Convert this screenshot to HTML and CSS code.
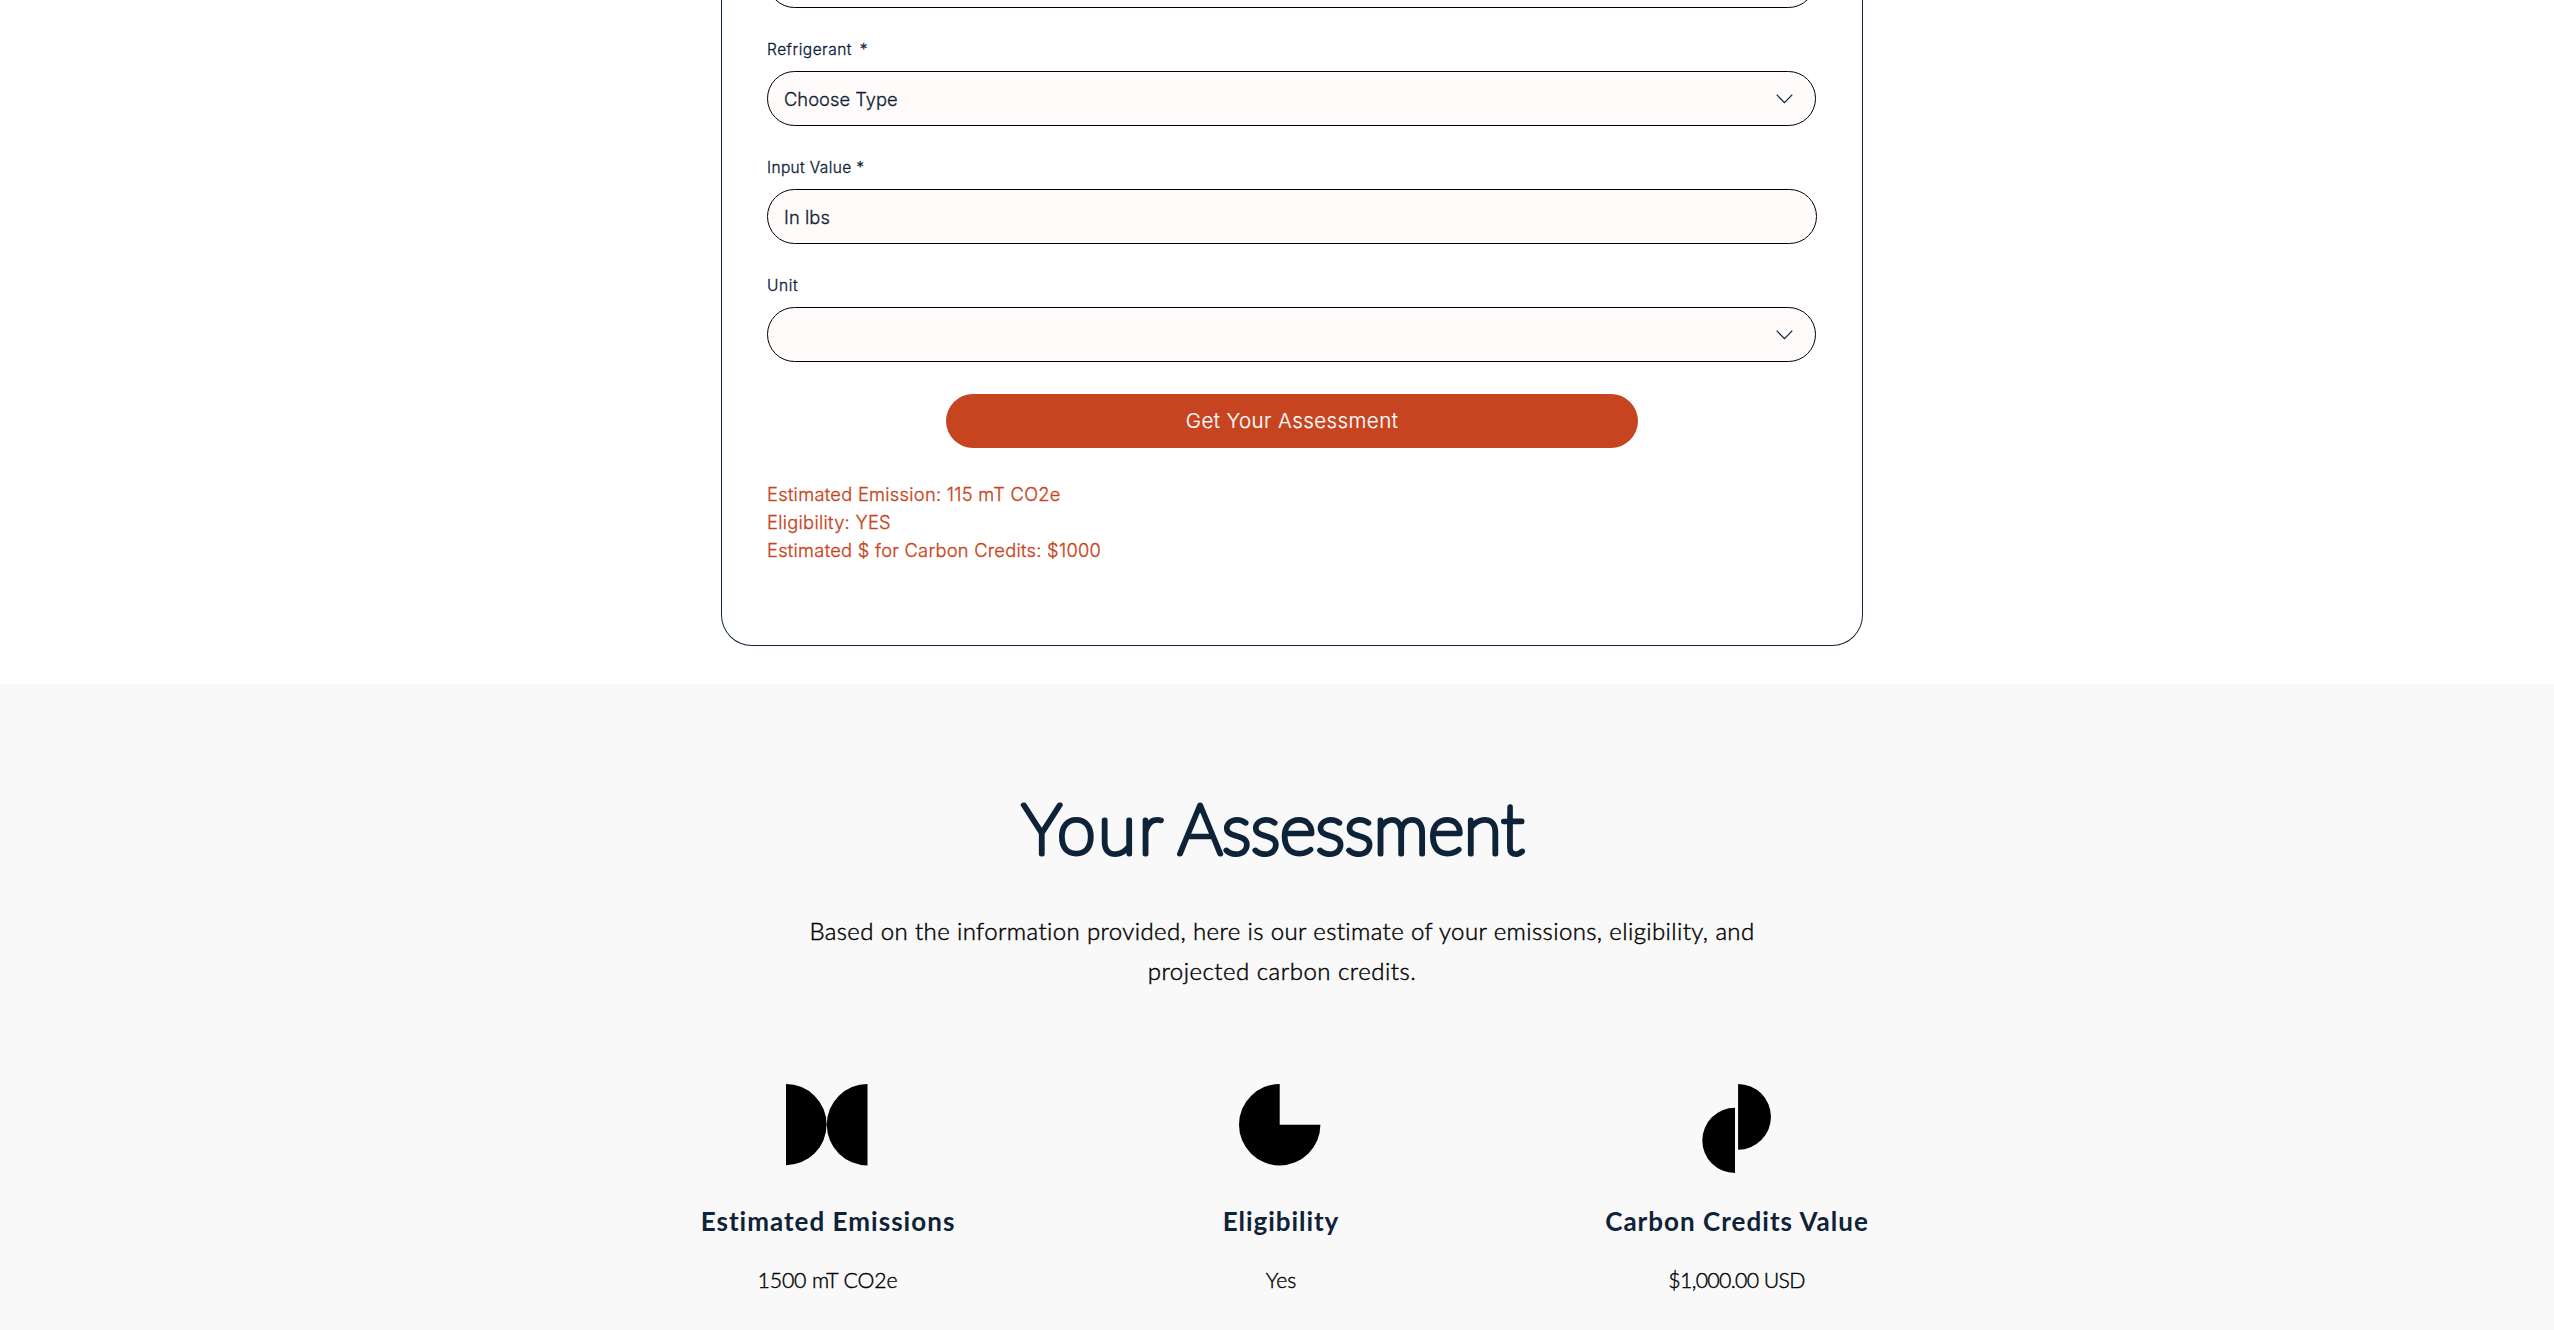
FILE: index.html
```
<!DOCTYPE html>
<html lang="en">
<head>
<meta charset="utf-8">
<title>Your Assessment</title>
<link rel="stylesheet" href="styles.css">
</head>
<body>
<section class="form-section">
  <form class="card">
    <div class="control control-cut"></div>
    <div class="label label-refrigerant">Refrigerant <span class="star star-wide">*</span></div>
    <div class="control">
      <span class="value value-type">Choose Type</span>
      <svg class="chevron" width="17" height="10" viewBox="0 0 17 10"><path d="M.7 .7 L8.5 8.7 L16.3 .7" fill="none" stroke="#0e2238" stroke-width="1.2"/></svg>
    </div>
    <div class="label label-value">Input Value <span class="star">*</span></div>
    <div class="control control-input"><span class="value">In lbs</span></div>
    <div class="label label-unit">Unit</div>
    <div class="control">
      <svg class="chevron" width="17" height="10" viewBox="0 0 17 10"><path d="M.7 .7 L8.5 8.7 L16.3 .7" fill="none" stroke="#0e2238" stroke-width="1.2"/></svg>
    </div>
    <button class="submit" type="button">Get Your Assessment</button>
    <div class="results">
      <div>Estimated Emission: 115 mT CO2e</div>
      <div>Eligibility: YES</div>
      <div class="credits">Estimated $ for Carbon Credits: $1000</div>
    </div>
  </form>
</section>
<section class="assessment">
  <h1 class="heading">
    <svg width="520" height="86" viewBox="0 0 520 86"><text class="heading-text" y="68.5"><tspan x="9" textLength="139">Your</tspan> <tspan x="165" textLength="346">Assessment</tspan></text></svg>
  </h1>
  <p class="intro"><span>Based on the information provided, here is our estimate of your emissions, eligibility, and</span><br><span class="intro-end">projected carbon credits.</span></p>
  <div class="metrics">
    <div class="metric">
      <svg class="icon" width="82" height="90" viewBox="0 0 82 90"><path d="M0 0 A40.6 40.6 0 0 1 0 81.2Z M81.5 0 A40.7 40.7 0 0 0 81.5 81.4Z"/></svg>
      <h2 class="metric-title">Estimated Emissions</h2>
      <div class="metric-value">1500 mT CO2e</div>
    </div>
    <div class="metric">
      <svg class="icon icon-pie" width="82" height="90" viewBox="0 0 82 90"><path d="M40.7 40.7 V0 A40.7 40.7 0 1 0 81.4 40.7Z"/></svg>
      <h2 class="metric-title metric-title-tight">Eligibility</h2>
      <div class="metric-value value-yes">Yes</div>
    </div>
    <div class="metric">
      <svg class="icon" width="68" height="90" viewBox="0 0 68 90"><path d="M33 23.7 A32.7 32.7 0 0 0 33 89.1Z M36.1 0 A32.85 32.85 0 0 1 36.1 65.7Z"/></svg>
      <h2 class="metric-title">Carbon Credits Value</h2>
      <div class="metric-value value-usd">$1,000.00 USD</div>
    </div>
  </div>
</section>
</body>
</html>
```
FILE: styles.css
```
* { box-sizing: border-box; }
body { margin: 0; background: #fff; color: #0e2238; overflow: hidden; }

.form-section {
  height: 684px;
  padding-left: 721px;
  overflow: hidden;
  font-family: Inter, "Liberation Sans", sans-serif;
  font-weight: 300;
  -webkit-text-stroke: 0.3px currentColor;
}
.card {
  display: flex;
  flex-direction: column;
  width: 1142px;
  height: 646px;
  padding: 0 45px;
  border: 1px solid #0e2238;
  border-top: 0;
  border-radius: 0 0 31px 31px;
}
.control {
  display: flex;
  align-items: center;
  justify-content: space-between;
  flex: none;
  width: 1049px;
  height: 55px;
  padding: 0 22px 0 16px;
  border: 1px solid #000;
  border-radius: 28px;
  background: #fffbfa;
}
.control-cut { margin-top: -47px; }
.control-input { width: 1050px; }
.chevron { margin-left: auto; }
.value { font-size: 18.3px; line-height: 24px; letter-spacing: 0.1px; }
.value-type { letter-spacing: 0.04px; }
.label {
  margin: 32px 0 11px;
  font-size: 15.5px;
  line-height: 20px;
  letter-spacing: 0.5px;
  white-space: nowrap;
}
.label-value { letter-spacing: 0.36px; }
.label-unit { letter-spacing: 0.6px; }
.star-wide { margin-left: 3px; }
.submit {
  flex: none;
  align-self: center;
  width: 692px;
  height: 54px;
  margin-top: 32px;
  padding: 0;
  border: 0;
  border-radius: 27px;
  background: #c74420;
  color: #fff;
  font: 300 20.5px/54px Inter, "Liberation Sans", sans-serif;
  letter-spacing: 0.42px;
  -webkit-text-stroke: 0.2px #fff;
}
.results {
  margin-top: 32px;
  color: #c74420;
  font-size: 18.3px;
  line-height: 28px;
  letter-spacing: 0.28px;
}
.credits { letter-spacing: 0.27px; }

.assessment {
  height: 646px;
  padding-top: 101px;
  background: #f9f9f9;
  font-family: Lato, "Liberation Sans", sans-serif;
  text-align: center;
}
.heading {
  display: flex;
  justify-content: center;
  margin: 0 8px 40px 0;
}
.heading-text {
  fill: #0e2238;
  font-size: 69.4px;
  font-weight: 200;
  stroke: #0e2238;
  stroke-width: 5px;
  stroke-linejoin: round;
}
.intro {
  margin: 0 0 93px 10px;
  color: #000;
  font-size: 24px;
  font-weight: 300;
  line-height: 40px;
  letter-spacing: 0.38px;
  -webkit-text-stroke: 0.45px #000;
}
.intro-end { letter-spacing: 0.5px; }
.metrics {
  display: grid;
  grid-template-columns: 454px 454px 456px;
  margin-left: 600px;
}
.metric { display: flex; flex-direction: column; align-items: center; }
.icon { display: block; overflow: visible; fill: #000; }
.icon-pie { margin-right: 2px; }
.metric-title {
  margin: 31px 0 29px;
  padding-left: 2px;
  font-size: 26px;
  font-weight: 700;
  line-height: 32px;
  letter-spacing: 1.02px;
}
.metric-title-tight { padding-left: 0; letter-spacing: 0.95px; }
.metric-value {
  padding-left: 1px;
  color: #000;
  font-size: 21.3px;
  font-weight: 300;
  line-height: 28px;
  letter-spacing: -0.11px;
  -webkit-text-stroke: 0.4px #000;
}
.value-yes { padding-left: 0; }
.value-usd { letter-spacing: -0.65px; }
```
